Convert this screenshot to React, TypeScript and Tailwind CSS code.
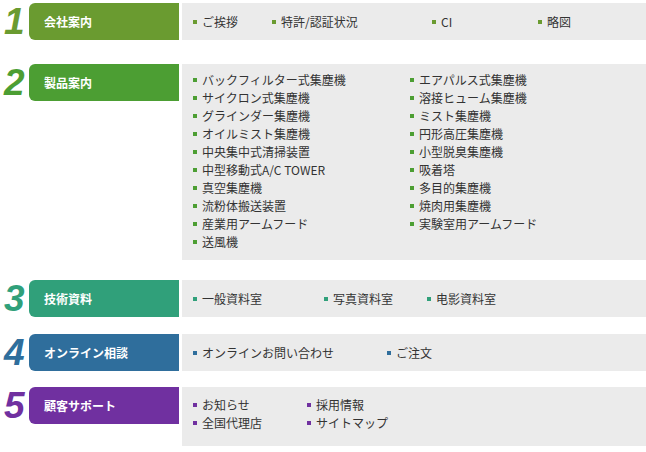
import React from "react";

type Item = { label: string; w?: string };

interface SectionProps {
  num: string;
  title: string;
  color: string;
  textColor: string;
  bullet: string;
  className?: string;
  children: React.ReactNode;
  boxClass?: string;
}

const Bullet = ({ cls }: { cls: string }) => (
  <span className={`mr-[5px] inline-block h-[4px] w-[4px] shrink-0 ${cls}`} />
);

const Link = ({ item, bullet }: { item: Item; bullet: string }) => (
  <div className={`flex h-[18px] items-center ${item.w ?? ""}`}>
    <Bullet cls={bullet} />
    <span className="whitespace-nowrap">{item.label}</span>
  </div>
);

const Section = ({ num, title, color, textColor, bullet, className = "", children, boxClass = "" }: SectionProps) => (
  <div className={`flex items-start ${className}`}>
    <div
      className={`flex h-[37px] w-[29px] items-center pl-[4px] text-[37px] font-bold italic leading-none ${textColor}`}
      style={{ fontFamily: '"Liberation Sans", Arial, sans-serif' }}
    >
      {num}
    </div>
    <div className={`flex h-[37px] w-[150px] shrink-0 items-center rounded-l-[6px] pl-[15px] text-[12px] font-bold text-white ${color}`}>
      {title}
    </div>
    <div className={`ml-[3px] flex-1 bg-[#ebebeb] pl-[11px] text-[12px] text-[#333] ${boxClass}`}>{children}</div>
  </div>
);

const productsLeft = [
  "バックフィルター式集塵機",
  "サイクロン式集塵機",
  "グラインダー集塵機",
  "オイルミスト集塵機",
  "中央集中式清掃装置",
  "中型移動式A/C TOWER",
  "真空集塵機",
  "流粉体搬送装置",
  "産業用アームフード",
  "送風機",
];

const productsRight = [
  "エアパルス式集塵機",
  "溶接ヒューム集塵機",
  "ミスト集塵機",
  "円形高圧集塵機",
  "小型脱臭集塵機",
  "吸着塔",
  "多目的集塵機",
  "焼肉用集塵機",
  "実験室用アームフード",
];

export default function App() {
  return (
    <div
      className="h-[452px] w-[646px] bg-white pt-[3px]"
      style={{ fontFamily: '"Noto Sans CJK JP", "Noto Sans", sans-serif' }}
    >
      <Section
        num="1"
        title="会社案内"
        color="bg-[#6a9b30]"
        textColor="text-[#6a9b30]"
        bullet="bg-[#6a9b30]"
        boxClass="flex h-[37px] items-center"
      >
        {[
          { label: "ご挨拶", w: "w-[79px]" },
          { label: "特許/認証状況", w: "w-[160px]" },
          { label: "CI", w: "w-[106px]" },
          { label: "略図" },
        ].map((it) => (
          <Link key={it.label} item={it} bullet="bg-[#6a9b30]" />
        ))}
      </Section>

      <Section
        num="2"
        title="製品案内"
        color="bg-[#4c9e33]"
        textColor="text-[#4c9e33]"
        bullet="bg-[#4c9e33]"
        className="mt-[24px]"
        boxClass="flex pt-[7px] pb-[9px]"
      >
        <div className="w-[217px]">
          {productsLeft.map((p) => (
            <Link key={p} item={{ label: p }} bullet="bg-[#4c9e33]" />
          ))}
        </div>
        <div>
          {productsRight.map((p) => (
            <Link key={p} item={{ label: p }} bullet="bg-[#4c9e33]" />
          ))}
        </div>
      </Section>

      <Section
        num="3"
        title="技術資料"
        color="bg-[#30a07a]"
        textColor="text-[#30a07a]"
        bullet="bg-[#30a07a]"
        className="mt-[20px]"
        boxClass="flex h-[37px] items-center"
      >
        {[
          { label: "一般資料室", w: "w-[131px]" },
          { label: "写真資料室", w: "w-[103px]" },
          { label: "电影資料室" },
        ].map((it) => (
          <Link key={it.label} item={it} bullet="bg-[#30a07a]" />
        ))}
      </Section>

      <Section
        num="4"
        title="オンライン相談"
        color="bg-[#2f6e9c]"
        textColor="text-[#2f6e9c]"
        bullet="bg-[#2f6e9c]"
        className="mt-[17px]"
        boxClass="flex h-[37px] items-center"
      >
        {[
          { label: "オンラインお問い合わせ", w: "w-[194px]" },
          { label: "ご注文" },
        ].map((it) => (
          <Link key={it.label} item={it} bullet="bg-[#2f6e9c]" />
        ))}
      </Section>

      <Section
        num="5"
        title="顧客サポート"
        color="bg-[#7030a0]"
        textColor="text-[#7030a0]"
        bullet="bg-[#7030a0]"
        className="mt-[16px]"
        boxClass="flex pt-[9px] pb-[14px]"
      >
        <div className="w-[114px]">
          <Link item={{ label: "お知らせ" }} bullet="bg-[#7030a0]" />
          <Link item={{ label: "全国代理店" }} bullet="bg-[#7030a0]" />
        </div>
        <div>
          <Link item={{ label: "採用情報" }} bullet="bg-[#7030a0]" />
          <Link item={{ label: "サイトマップ" }} bullet="bg-[#7030a0]" />
        </div>
      </Section>
    </div>
  );
}
